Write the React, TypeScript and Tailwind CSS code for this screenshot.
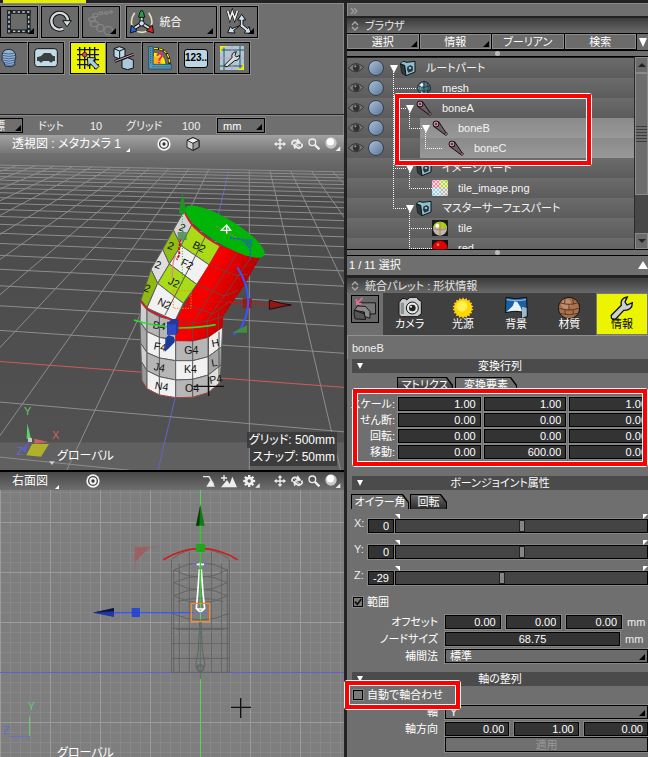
import React from "react";

const lines = (from: number, to: number) =>
  Array.from({ length: to - from + 1 }, (_, i) => i + from);

function Corner({ light = false }: { light?: boolean }) {
  return (
    <span
      className={
        "pointer-events-none absolute right-[3px] bottom-[3px] border-b-[6px] border-l-[6px] border-l-transparent " +
        (light ? "border-b-white" : "border-b-black")
      }
    />
  );
}

/* ---------- toolbar ---------- */

function ToolButton({
  label,
  width,
  corner,
  children,
}: {
  label: string;
  width: string;
  corner?: boolean;
  children: React.ReactNode;
}) {
  return (
    <button
      aria-label={label}
      className={
        "relative flex h-8 shrink-0 items-center justify-center gap-1 border border-black bg-[#6b6b6b] text-white shadow-[0_0_0_1px_#8a8a8a] " +
        width
      }
    >
      {children}
      {corner && <Corner />}
    </button>
  );
}

const MarqueeIcon = () => (
  <svg className="size-6" viewBox="0 0 72 72" fill="#a9c6d2" stroke="#111" strokeWidth="3">
    {[2, 16, 30, 44, 58].map((p) => (
      <g key={p}>
        <rect x={p} y="2" width="11" height="8" />
        <rect x={p} y="60" width="11" height="8" />
        <rect x="2" y={p} width="8" height="11" />
        <rect x="61" y={p} width="8" height="11" />
      </g>
    ))}
  </svg>
);

const RotateIcon = () => (
  <svg className="size-6" viewBox="0 0 72 72" fill="none">
    <path d="M46 56A25 25 0 1 1 60 34" stroke="#111" strokeWidth="13" />
    <path d="M46 56A25 25 0 1 1 60 34" stroke="#d5dde0" strokeWidth="7" />
    <path d="M44 32h26L57 50z" fill="#d5dde0" stroke="#111" strokeWidth="3" />
  </svg>
);

const ChainIcon = () => (
  <svg className="size-7" viewBox="0 0 84 84" fill="none" stroke="#858585" strokeWidth="4">
    <circle cx="64" cy="68" r="13" />
    <circle cx="40" cy="60" r="11" />
    <ellipse cx="22" cy="48" rx="12" ry="8" />
    <ellipse cx="15" cy="34" rx="10" ry="6" />
    <ellipse cx="25" cy="22" rx="8" ry="5" />
    <ellipse cx="42" cy="16" rx="6" ry="4" />
    <ellipse cx="58" cy="15" rx="5" ry="4" />
    <ellipse cx="72" cy="12" rx="4" ry="3" />
  </svg>
);

const GizmoIcon = () => (
  <svg className="size-6" viewBox="0 0 72 72">
    <path d="M14 8Q0 28 6 46M56 8q14 20 8 38M20 64q16 6 30 0" fill="none" stroke="#e5dfb4" strokeWidth="5" />
    <path d="M35 36v-16M35 40 14 54M35 40l22 14" stroke="#111" strokeWidth="12" />
    <path d="M35 36v-16M35 40 14 54M35 40l22 14" stroke="#cfe3e5" strokeWidth="6" />
    <path d="M26 22Q28 4 35 0q7 4 9 22z" fill="#25a044" stroke="#111" strokeWidth="3" />
    <path d="M1 69 4 46l18 16z" fill="#2467cc" stroke="#111" strokeWidth="3" />
    <path d="m71 69-4-23-18 16z" fill="#e2242b" stroke="#111" strokeWidth="3" />
    <circle cx="35" cy="40" r="8" fill="#cde" stroke="#111" strokeWidth="3" />
  </svg>
);

const WorldIcon = () => (
  <svg className="size-7" viewBox="0 0 84 84">
    <path d="m8 8 7 24 7-20 7 20 8-24" fill="none" stroke="#111" strokeWidth="9" />
    <path d="m8 8 7 24 7-20 7 20 8-24" fill="none" stroke="#eee" strokeWidth="5" />
    <g stroke="#111" strokeWidth="3" fill="#cfe0ee">
      <path d="M46 52V36h-8l12-17 12 17h-8v14l14 12 4-6 6 20-20-1 4-7-18-14-18 13 4 8-22-1 8-19 5 7z" />
    </g>
  </svg>
);

const HeadIcon = () => (
  <svg className="size-6" viewBox="0 0 72 72">
    <path d="M8 26Q10 3 34 3q26 2 26 30l-4 12v18l-14 6-22-2-4-12-8-10z" fill="#8fb6d4" stroke="#111" strokeWidth="3" />
    <path d="M11 17q22 8 45 0M9 26q24 8 50 0M9 35q24 8 50 0M11 44q22 8 45 0M17 53q18 7 38 0M20 61q16 6 35 0" stroke="#3a4b88" strokeWidth="3" fill="none" />
  </svg>
);

const CarIcon = () => (
  <svg className="size-6" viewBox="0 0 72 72">
    <rect x="2" y="8" width="68" height="54" rx="9" fill="#c2dbe6" stroke="#111" strokeWidth="3" />
    <path d="M9 45V34l12-4 9-9h19l8 9h6v15h-6q-6 9-12 0H27q-6 9-12 0z" fill="#3a3f42" />
  </svg>
);

const SnapGridIcon = () => (
  <svg className="size-6" viewBox="0 0 72 72">
    <path d="M3 11h66M3 26h66M3 41h66M3 56h66M11 3v66M26 3v66M41 3v66M56 3v66" stroke="#111" strokeWidth="4" />
    <path d="m34 34 25 2-7 8 17 17-9 9-17-17-7 8z" fill="#a9cce0" stroke="#111" strokeWidth="3" />
    <circle cx="26" cy="26" r="7" fill="#d33a8b" stroke="#111" strokeWidth="2" />
  </svg>
);

const MirrorIcon = () => (
  <svg className="size-6" viewBox="0 0 72 72" stroke="#111" strokeWidth="3">
    <path d="m6 8 16-6 17 6v24l-16 7-17-7z" fill="#bcd9e8" />
    <path d="m6 8 17 7 16-7M23 15v23" fill="none" />
    <path d="m30 42 17-7 17 7v24l-17 5-17-5z" fill="#a9cadb" />
    <path d="m8 46 56-21" strokeWidth="9" />
    <path d="m8 46 56-21" stroke="#e0a0b8" strokeWidth="3" />
  </svg>
);

const ProtractorIcon = () => (
  <svg className="size-6" viewBox="0 0 72 72">
    <path d="M18 7q46 0 47 48" fill="none" stroke="#111" strokeWidth="7" />
    <path d="M18 7q46 0 47 48" fill="none" stroke="#ffe800" strokeWidth="4" strokeDasharray="11 4" />
    <path d="M16 18q36 2 38 38H16z" fill="#f4f000" stroke="#333" strokeWidth="2" />
    <path d="M16 30q24 2 26 26H16z" fill="#ffb01c" />
    <path d="M28 30q2-9 10-7 9 4 0 12l-4 6v3m-1 4v4" fill="none" stroke="#e8237c" strokeWidth="6" />
    <path d="M2 2h13v53h55v14H2z" fill="#4d9dc4" stroke="#16394d" strokeWidth="2" />
    <path d="M8 6v48M14 62h54" stroke="#1a4a66" strokeWidth="4" strokeDasharray="2 4" />
  </svg>
);

const WrenchGridIcon = () => (
  <svg className="size-6" viewBox="0 0 72 72">
    <path d="M0 0h72v72H0z" fill="#a9cbd8" />
    <path d="M12 0v72M60 0v72M0 12h72M0 60h72" stroke="#3b4d55" strokeWidth="3" />
    <path d="M36 0v72M0 36h72" stroke="#e48db4" strokeWidth="3" />
    <path d="M2 18V2h16M54 70h16V54" fill="none" stroke="#f7ee00" strokeWidth="5" />
    <path d="m14 57 22-22q-3-15 13-18l-4 11 4 5 10-5q1 15-15 16L22 62q-9 2-8-5z" fill="#d8dcdc" stroke="#111" strokeWidth="3" />
  </svg>
);

/* ---------- viewport headers ---------- */

const TargetIcon = () => (
  <svg className="size-3.5" viewBox="0 0 42 42">
    <circle cx="21" cy="21" r="20" fill="#f4f4f4" />
    <circle cx="21" cy="21" r="13" fill="none" stroke="#444" strokeWidth="4" />
    <circle cx="21" cy="21" r="5" fill="#333" />
  </svg>
);

const CubeIcon = () => (
  <svg className="size-3.5" viewBox="0 0 42 42" stroke="#111" strokeWidth="2.5">
    <path d="M21 2 39 10v21L21 40 3 31V10z" fill="#cfcfcf" />
    <path d="M21 2 39 10 21 19 3 10z" fill="#f2f2f2" />
    <path d="M21 19 39 10v21L21 40z" fill="#999" />
  </svg>
);

const MoveIcon = () => (
  <svg className="size-3" viewBox="0 0 36 36">
    <path d="m18 0 7 8h-5v8h8v-5l8 7-8 7v-5h-8v8h5l-7 8-7-8h5v-8H8v5l-8-7 8-7v5h8V8h-5z" fill="#eee" />
  </svg>
);

const OrbitIcon = () => (
  <svg className="size-3" viewBox="0 0 36 36" fill="none" stroke="#eee">
    <path d="M4 20Q0 7 14 7l10 6M32 17q5 11-9 14L11 24" strokeWidth="5" />
    <path d="m20 2 10 14-14 2zM16 20l-9-1 4 14zM10 13q9 11 18 14" fill="#eee" strokeWidth="2" />
  </svg>
);

const ZoomIcon = () => (
  <svg className="size-3" viewBox="0 0 36 36" fill="none" stroke="#eee">
    <circle cx="13" cy="13" r="10" strokeWidth="4" />
    <path d="m21 21 13 13" strokeWidth="7" />
  </svg>
);

const BallIcon = () => (
  <svg className="h-3.5 w-4" viewBox="0 0 48 42">
    <circle cx="18" cy="18" r="17" fill="#c8c8c8" />
    <circle cx="16" cy="14" r="11" fill="#fff" />
    <path d="M46 28v14H32z" fill="#eee" />
  </svg>
);

const ViewNav = () => (
  <div className="flex items-center gap-[5px] pr-[3px]">
    <button aria-label="移動"><MoveIcon /></button>
    <button aria-label="回転"><OrbitIcon /></button>
    <button aria-label="ズーム"><ZoomIcon /></button>
    <button aria-label="表示"><BallIcon /></button>
  </div>
);

/* ---------- perspective scene ---------- */

const G = "#8d8d8d";

const gridTop = (x: number) => 45 + x * 0.02;

function PerspectiveGrid() {
  return (
    <g strokeWidth="3">
      {lines(-12, 6).map((k) => {
        const slope = 0.236 * k;
        const x1 = 748 + slope * 250;
        const y1 = gridTop(x1);
        return (
          <line
            key={k}
            x1={748 + slope * (y1 + 200)}
            y1={y1}
            x2={748 + slope * 1200}
            y2={1000}
            stroke={k === -1 ? "#6464c8" : G}
          />
        );
      })}
      {lines(-2, 21).map((k) => {
        const y = 3 / (0.003738 + 0.000492 * k) - 168;
        return (
          <line
            key={k}
            x1={0}
            y1={y}
            x2={1035}
            y2={y + (1035 * (y + 168)) / 10680}
            stroke={k === 0 ? "#d05a5a" : G}
          />
        );
      })}
    </g>
  );
}

const WHITE = "#f1f1f1";
const LIME = "#aadb18";
const GREY = "#b6b6b6";

const tiles: [string, string][] = [
  ["553,182 575,225 543,287 520,240", "#d4d4d4"],
  ["575,225 612,258 660,288 628,345 543,287", LIME],
  ["520,240 543,287 508,342 488,298", "#93bd14"],
  ["543,287 628,345 590,403 508,342", WHITE],
  ["488,298 508,342 473,400 453,358", "#dedede"],
  ["508,342 590,403 550,460 473,400", LIME],
  ["453,358 473,400 441,472 423,450", "#8fb912"],
  ["473,400 550,460 525,512 441,474", WHITE],
  ["422,455 441,480 441,545 420,515", "#cfcfcf"],
  ["441,480 478,500 527,513 527,570 478,562 441,545", GREY],
  ["420,515 441,545 441,608 422,580", "#a8a8a8"],
  ["441,545 478,562 527,572 527,632 478,624 441,608", WHITE],
  ["527,572 578,573 625,562 625,620 578,632 527,632", GREY],
  ["625,562 668,530 665,590 625,620", "#ededed"],
  ["422,580 441,608 441,662 424,635", "#cfcfcf"],
  ["441,608 478,624 527,632 527,690 478,680 441,662", GREY],
  ["527,632 578,632 625,620 625,675 578,688 527,690", WHITE],
  ["625,620 665,590 663,645 625,675", "#a5a5a5"],
  ["424,635 441,662 441,716 426,692", "#999"],
  ["441,662 478,680 527,690 527,743 478,735 441,716", WHITE],
  ["527,690 578,688 625,675 625,728 578,742 527,743", GREY],
  ["625,675 663,645 660,698 625,728", "#e0e0e0"],
];

const marks: [string, number, number, number][] = [
  ["2", 535, 240, 20],
  ["B2", 575, 292, 26],
  ["2", 500, 295, 20],
  ["F2", 540, 344, 26],
  ["2", 462, 352, 20],
  ["J2", 502, 400, 26],
  ["2", 430, 422, 20],
  ["N2", 470, 462, 26],
  ["B4", 457, 534, 10],
  ["F4", 460, 598, 10],
  ["G4", 553, 613, 0],
  ["H", 637, 592, -10],
  ["J4", 460, 660, 10],
  ["K4", 552, 668, 0],
  ["L", 636, 650, -10],
  ["N4", 463, 716, 10],
  ["O4", 555, 726, 0],
  ["P4", 630, 702, -10],
];

function PerspectiveScene() {
  return (
    <svg
      className="absolute inset-0 size-full [font-family:'Liberation_Sans','Noto_Sans_CJK_JP',sans-serif]"
      viewBox="0 9 1032 975"
      preserveAspectRatio="xMinYMin slice"
    >
      <defs>
        <linearGradient id="sky" x1="0" y1="0" x2="0" y2="1">
          <stop offset="0" stopColor="#707070" />
          <stop offset="0.14" stopColor="#4b4b4b" />
          <stop offset="1" stopColor="#525252" />
        </linearGradient>
        <linearGradient id="redBody" x1="0" y1="0" x2="1" y2="0.5">
          <stop offset="0.5" stopColor="#f60000" />
          <stop offset="0.85" stopColor="#b80000" />
        </linearGradient>
      </defs>
      <rect y="9" width="1040" height="980" fill="url(#sky)" />
      <rect y="877" width="1040" height="110" fill="#606060" />
      <PerspectiveGrid />

      <g stroke="#5f5f5f" strokeWidth="3" strokeLinejoin="round">
        {tiles.map(([points, fill]) => (
          <polygon key={points} points={points} fill={fill} />
        ))}
      </g>
      <path d="M578 573V742M478 500v235M617 258 495 495M625 562v166M657 545v160" stroke="#555" strokeWidth="3" fill="none" />
      <path d="M660 288 780 322 730 410 670 497 668 533 625 562 578 573 527 572 525 513z" fill="url(#redBody)" />
      <path
        d="M712 308 578 520v50M755 320 622 510v52M630 345l80 32 34-4M590 403l82 35 42-16M550 460l90 32 50-40M527 513l51 7 50-8 40-12M655 490v50"
        fill="none"
        stroke="#77403c"
        strokeWidth="3"
      />
      <ellipse cx="674" cy="245" rx="138" ry="38" transform="rotate(31 674 245)" fill="#00b507" />
      <path d="M553 184q10 26 30 48 38 36 80 56M424 455q14 24 45 38l58 20" fill="none" stroke="#dc1a24" strokeWidth="5" />
      <path d="M426 694 441 716 478 735 527 743 578 742 625 728 660 698" fill="none" stroke="#c33" strokeWidth="3" strokeDasharray="6 4" />
      <g fontSize="32" fill="#111">
        {marks.map(([t, x, y, r]) => (
          <text key={t + x + y} x={x} y={y} transform={`rotate(${r} ${x} ${y})`}>
            {t}
          </text>
        ))}
      </g>

      <path d="M547 190V400" stroke="#12c012" strokeWidth="3" strokeDasharray="3 5" />
      <path d="m547 128 12 58-8 7h-9l-5-6z" fill="#199a1c" />
      <rect x="533" y="246" width="27" height="24" fill="#3f8a50" opacity="0.8" />
      <path d="m542 268-5 30 1 16-8 15" fill="none" stroke="#d01818" strokeWidth="6" strokeDasharray="9 3" />
      <path d="M517 390q-1-60 10-72" fill="none" stroke="#d88a80" strokeWidth="4" />
      <rect x="520" y="422" width="53" height="53" fill="none" stroke="#ff8b1a" strokeWidth="3" strokeDasharray="4 4" />
      <path d="m578 453 110 4" stroke="#c02020" strokeWidth="3" strokeDasharray="4 5" />
      <path d="m685 457 125 6" stroke="#c81818" strokeWidth="4" />
      <path d="M808 450v28l42-9 24-4-30-5z" fill="#8e1a18" stroke="#2b0706" strokeWidth="3" />
      <rect x="728" y="445" width="27" height="30" fill="#941c1c" />
      <path d="M712 352q60 94 10 184l-22 19" fill="none" stroke="#3557ff" strokeWidth="6" />
      <path d="m690 264 38 4 23 28v36" fill="none" stroke="#3046ff" strokeWidth="4" strokeDasharray="7 4" />
      <path d="M718 268h38v24z" fill="#14807a" />
      <path d="M741 526v22h-45z" fill="#3f8f3c" />
      <path d="m648 228 60 34" stroke="#d46a50" strokeWidth="3" strokeDasharray="6 3" />
      <path d="m680 225-16 16h28zM680 225v26" fill="none" stroke="#fff" strokeWidth="4" />
      <path d="M402 510q55 18 135 24 70-1 110-10" fill="none" stroke="#26e02a" strokeWidth="5" />
      <path d="m507 515 8-8h20v39l-8 8h-26v-39z" fill="#25389c" />
      <rect x="502" y="523" width="26" height="30" fill="#2f49c6" />
      <path d="m496 565 10-10 16 6 2 16-16 16-13 12z" fill="#1b3a9c" />
      <path d="M580 709h92M626 680v58" stroke="#111" strokeWidth="4" />

      <path d="m82 820 11 46H80z" fill="#5fd06a" />
      <path d="m102 866 44 10-42 5z" fill="#d0625e" />
      <path d="m88 876-12 32-12-8z" fill="#5a5ec8" />
      <path d="M96 882h51l-24 38-44-4z" fill="#b0b02c" />
      <rect x="84" y="864" width="12" height="12" fill="#c8c8c8" />
      <path d="M147 934h17l-8 11z" fill="#ccc" />
      <g fontSize="33">
        <text x="72" y="796" fill="#62c86a">Y</text>
        <text x="156" y="868" fill="#cf6460">X</text>
        <text x="50" y="914" fill="#6468d0">Z</text>
      </g>
    </svg>
  );
}

/* ---------- orthographic scene ---------- */

function SideScene() {
  return (
    <svg
      className="absolute inset-0 size-full [font-family:'Liberation_Sans','Noto_Sans_CJK_JP',sans-serif]"
      viewBox="0 60 1032 830"
      preserveAspectRatio="xMinYMin slice"
    >
      <rect y="60" width="1040" height="900" fill="#7e7e7e" />
      <g shapeRendering="crispEdges" strokeWidth="3">
        {lines(0, 34).map((k) => (
          <line key={"v" + k} x1={k * 30 + 1.5} y1={60} x2={k * 30 + 1.5} y2={960} stroke="#888" />
        ))}
        {lines(0, 28).map((k) => (
          <line key={"h" + k} x1={0} y1={k * 30 + 67.5} x2={1040} y2={k * 30 + 67.5} stroke="#888" />
        ))}
        {lines(0, 6).map((k) => (
          <line key={"V" + k} x1={k * 150 + 1.5} y1={60} x2={k * 150 + 1.5} y2={960} stroke="#9b9b9b" />
        ))}
        {lines(0, 5).map((k) => (
          <line key={"H" + k} x1={0} y1={k * 150 + 157.5} x2={1040} y2={k * 150 + 157.5} stroke="#9b9b9b" />
        ))}
        <line x1={0} y1={607.5} x2={1040} y2={607.5} stroke="#5f5fd6" />
        <line x1={601.5} y1={60} x2={601.5} y2={960} stroke="#4cdc4c" />
      </g>

      <g fill="none" stroke="#636363" strokeWidth="3">
        <path d="M514 268V607M521 300V607M538 280V607M568 245V607M634 245V607M664 280V607M682 300V607M688 268V607" />
        <path d="M514 475h174M530 478h144M514 520h174M514 565h174M514 607h174" />
        <path d="M517 266q84-60 169 0M522 300q80-44 160 0q-80 44-160 0M522 338q80-40 160 0q-80 44-160 0M522 377q80-40 160 0q-80 44-160 0M516 430q86 40 172 0M532 395q68-20 138 0" />
        <path d="m599 455-4 85-8 45 14 22 14-22-8-45-4-85zM587 590h28M601 455v172" />
        <circle cx="601" cy="594" r="11" />
      </g>
      <path d="M490 269q112-68 223 0" fill="none" stroke="#cc1f1f" strokeWidth="5" />
      <path d="M405 232h44l-44 44z" fill="#9c6060" />
      <path d="M405 300v-68h66" fill="none" stroke="#9c6060" strokeWidth="2" />
      <rect x="588" y="222" width="27" height="24" fill="#1fa61f" />
      <path d="m601 104 13 63h-26z" fill="#127a14" />
      <path d="m601 104-13 63h10z" fill="#063c08" />
      <path d="m598 300-5 70-4 45 12 12 13-12-5-45-5-70z" fill="none" stroke="#fff" strokeWidth="5" />
      <path d="M578 283h46" stroke="#7070e0" strokeWidth="4" />
      <path d="M590 283h22M601 276v16M590 417h22" stroke="#fff" strokeWidth="5" />
      <path d="M601 167V222M601 246V400" stroke="#1fd81f" strokeWidth="4" />
      <path d="M340 428h240" stroke="#3358ff" strokeWidth="4" />
      <path d="M580 428h42" stroke="#7070d0" strokeWidth="3" />
      <path d="m278 428 64-14v27z" fill="#2336a0" />
      <path d="m278 428 64-14v10z" fill="#0c1440" />
      <rect x="395" y="414" width="25" height="27" fill="#2a47cf" />
      <rect x="574" y="400" width="55" height="55" rx="3" fill="none" stroke="#f48a30" strokeWidth="4" />
      <path d="M693 712h60M722 684v60" stroke="#111" strokeWidth="4" />
      <path d="M89 740v60" stroke="#6fd070" strokeWidth="3" />
      <path d="M30 800h60" stroke="#6a6cd0" strokeWidth="3" />
      <g fontSize="33">
        <text x="83" y="721" fill="#62c86a">Y</text>
        <text x="9" y="792" fill="#6468d0">Z</text>
      </g>
    </svg>
  );
}

/* ---------- browser tree ---------- */

const FolderIcon = () => (
  <svg className="size-4" viewBox="0 0 48 48">
    <path d="m1 12 13 4 4 31-13-8z" fill="#2a3a42" stroke="#111" strokeWidth="2" />
    <path d="m1 12 8-8 12 3 24-3v32l-27 11-4-31z" fill="#8fc0d2" stroke="#111" strokeWidth="3" />
    <path d="m22 20 9-5 8 5-1 13-13 5-4-9z" fill="#26353c" />
    <circle cx="30" cy="24" r="4" fill="#8fc0d2" />
  </svg>
);

const MeshIcon = () => (
  <svg className="size-4" viewBox="0 0 48 48">
    <circle cx="24" cy="24" r="19" fill="#86bcd0" stroke="#111" strokeWidth="3" />
    <path d="M24 6Q4 24 24 42L40 36Q50 10 24 6" fill="#2c4a58" opacity=".6" />
    <path d="M6 18q18 8 36 0M6 30q18 8 36 0M24 5v38M14 8q-6 16 0 32M34 8q6 16 0 32" fill="none" stroke="#17262d" strokeWidth="2" />
    <circle cx="17" cy="15" r="5" fill="#e3f4fa" />
  </svg>
);

const BoneIcon = () => (
  <svg className="size-4" viewBox="0 0 48 48">
    <path d="m5 19 35 26 4-4L20 5z" fill="#6e5d62" stroke="#111" strokeWidth="3" />
    <circle cx="12" cy="12" r="9" fill="#c987a4" stroke="#111" strokeWidth="3" />
    <circle cx="12" cy="12" r="3" fill="#3d1f2c" />
    <circle cx="42" cy="42" r="4" fill="#c987a4" stroke="#111" strokeWidth="2" />
  </svg>
);

const TileImageIcon = () => (
  <svg className="size-4" viewBox="0 0 48 48">
    <path d="M0 0h24v24H0z" fill="#ef8fa4" />
    <path d="M24 0h24v24H24z" fill="#b6d83e" />
    <path d="M0 24h24v24H0z" fill="#9cd3e4" />
    <path d="M24 24h24v24H24z" fill="#bdb6b6" />
    <path d="m0 6 42 42M0 18l30 30M0 30l18 18M6 0l42 42M18 0l30 30M30 0l18 18M42 0 0 42M30 0 0 30M18 0 0 18M48 6 6 48M48 18 18 48M48 30 30 48" stroke="#fff" strokeWidth="3" opacity=".7" />
  </svg>
);

const TileBallIcon = () => (
  <svg className="size-4" viewBox="0 0 48 48">
    <path d="M0 0h48v48H0z" fill="#1c1c1c" />
    <circle cx="24" cy="26" r="21" fill="#bcbab0" />
    <path d="M4 20Q8 5 26 5q18 2 19 18l-22 4z" fill="#a6cf22" />
    <path d="M4 26q20 8 41 0M24 5v40" stroke="#c05a50" strokeWidth="2" fill="none" />
    <circle cx="16" cy="17" r="6" fill="#fff" />
  </svg>
);

const RedBallIcon = () => (
  <svg className="size-4" viewBox="0 0 48 48">
    <path d="M0 0h48v48H0z" fill="#141414" />
    <circle cx="24" cy="25" r="23" fill="#e60000" />
    <circle cx="18" cy="14" r="4" fill="#ff7a6a" />
  </svg>
);

const EyeIcon = () => (
  <svg className="h-3 w-4" viewBox="0 0 48 36">
    <path d="M1 18Q22-8 47 16 24 42 1 18z" fill="#777" stroke="#353535" strokeWidth="3" />
    <circle cx="25" cy="17" r="10" fill="#303030" />
    <circle cx="22" cy="13" r="3" fill="#999" />
  </svg>
);

type Node = {
  name: string;
  icon: React.ReactNode;
  indent: string;
  open?: boolean;
  eye?: boolean;
  selected?: boolean;
};

const nodes: Node[] = [
  { name: "ルートパート", icon: <FolderIcon />, indent: "pl-[2px]", open: true, eye: true },
  { name: "mesh", icon: <MeshIcon />, indent: "pl-[18px]", eye: true },
  { name: "boneA", icon: <BoneIcon />, indent: "pl-[18px]", open: true, eye: true },
  { name: "boneB", icon: <BoneIcon />, indent: "pl-0", open: true, eye: true, selected: true },
  { name: "boneC", icon: <BoneIcon />, indent: "pl-[16px]", eye: true, selected: true },
  { name: "イメージパート", icon: <FolderIcon />, indent: "pl-[18px]", open: true },
  { name: "tile_image.png", icon: <TileImageIcon />, indent: "pl-[34px]" },
  { name: "マスターサーフェスパート", icon: <FolderIcon />, indent: "pl-[18px]", open: true },
  { name: "tile", icon: <TileBallIcon />, indent: "pl-[34px]" },
  { name: "red", icon: <RedBallIcon />, indent: "pl-[34px]" },
];

function TreeRow({ node }: { node: Node }) {
  return (
    <li className="flex h-5 bg-linear-to-b from-[#6b6b6b] to-[#5c5c5c]">
      <div className="flex w-[39px] shrink-0 items-center gap-1 pl-px">
        {node.eye && (
          <>
            <EyeIcon />
            <span className="size-4 rounded-full border border-[#35404c] bg-linear-to-br from-[#a9bfd8] to-[#5c7898]" />
          </>
        )}
      </div>
      {node.selected && <span className="w-[34px] shrink-0" />}
      <div className={"relative flex min-w-0 flex-1 items-center " + node.indent + (node.selected ? " bg-linear-to-b from-[#8a8a8a] to-[#989898]" : "")}>
        <span className="z-10 w-3 shrink-0 text-center text-[11px] text-white">
          {node.open && (
            <span className="inline-block border-x-[4px] border-t-[8px] border-x-transparent border-t-white align-middle" />
          )}
        </span>
        <span className="z-10 mr-2.5 shrink-0">{node.icon}</span>
        <span className="whitespace-nowrap text-[#f4f4f4]">{node.name}</span>
      </div>
    </li>
  );
}

function Browser() {
  return (
    <section className="relative">
      <PanelTitle>ブラウザ</PanelTitle>
      <div className="flex h-[17px] bg-black pt-px">
        {["選択", "情報", "ブーリアン", "検索"].map((t, i) => (
          <button
            key={t}
            className="relative mr-px flex h-[15px] flex-1 items-center justify-center border border-[#8c8c8c] bg-[#6b6b6b] text-white"
          >
            {t}
            {i < 2 && <span className="absolute right-px bottom-px border-b-[6px] border-l-[6px] border-b-black border-l-transparent" />}
          </button>
        ))}
        <button aria-label="メニュー" className="flex w-[11px] items-center justify-center bg-[#6b6b6b]">
          <span className="border-x-[4px] border-t-[9px] border-x-transparent border-t-white" />
        </button>
      </div>
      <Splitter />
      <div className="flex h-[192px] overflow-hidden">
        <div className="relative min-w-0 flex-1 pt-px">
          <ul>
            {nodes.map((n) => (
              <TreeRow key={n.name} node={n} />
            ))}
          </ul>
          <svg className="pointer-events-none absolute top-px left-0 h-[192px] w-24" viewBox="0 0 96 192" fill="none" stroke="#fff" strokeDasharray="1 1">
            <path d="M46.5 14V150.5H60M46 30.500h25M46 50.500h14M62.500 54v16.500H76M78.500 74v16.500H102M46 110.500h14M62.500 114v16.500H88M62.500 154v36.500H88M62 170.500h26" />
          </svg>
        </div>
        <div className="flex w-[14px] shrink-0 flex-col border-l border-[#2a2a2a] bg-[#474747]">
          <button aria-label="上へ" className="flex h-4 items-center justify-center border border-[#8a8a8a] bg-[#6b6b6b]">
            <span className="border-x-[4px] border-b-[4px] border-x-transparent border-b-[#222]" />
          </button>
          <div className="flex h-[122px] flex-col items-center justify-center gap-[2px] border border-[#8a8a8a] bg-[#6d6d6d]">
            {lines(0, 5).map((i) => (
              <span key={i} className="h-px w-full bg-[#3c3c3c]" />
            ))}
          </div>
          <button aria-label="下へ" className="mt-auto flex h-4 items-center justify-center border border-[#8a8a8a] bg-[#6b6b6b]">
            <span className="border-x-[4px] border-t-[4px] border-x-transparent border-t-[#222]" />
          </button>
        </div>
      </div>
      <Splitter />
      <div className="flex h-[17px] items-center justify-between bg-[#6f6f6f] pl-0.5 text-white">
        <span>1 / 11 選択</span>
        <span className="border-x-[5px] border-b-[8px] border-x-transparent border-b-white" />
      </div>
      <Highlight className="top-[75px] right-[56px] left-[47px] h-[73px]" />
    </section>
  );
}

/* ---------- shared panel parts ---------- */

function Highlight({ className }: { className: string }) {
  return (
    <span className={"pointer-events-none absolute z-20 rounded-[3px] border border-white " + className}>
      <span className="block size-full border-4 border-[#ff0000]">
        <span className="block size-full border border-white" />
      </span>
    </span>
  );
}

function Splitter() {
  return (
    <div className="flex h-[7px] justify-center border-y border-black bg-[#6f6f6f]">
      <span className="size-[5px] rounded-full bg-[#bbb]" />
    </div>
  );
}

function PanelTitle({ children }: { children: React.ReactNode }) {
  return (
    <h2 className="flex h-[15px] items-center gap-1.5 bg-linear-to-b from-[#3c3c3c] to-[#6a6a6a] pl-1 text-[#e4e4e4]">
      <svg className="h-2.5 w-2" viewBox="0 0 24 30" fill="none" stroke="#aaa" strokeWidth="4">
        <path d="M3 12 12 3l9 9M3 18l9 9 9-9" />
      </svg>
      {children}
    </h2>
  );
}

function SectionHeader({ children }: { children: React.ReactNode }) {
  return (
    <h3 className="relative ml-[5px] flex h-[14px] items-center justify-center bg-[#4b4b4b] text-white">
      <span className="absolute left-[5px] border-x-[3px] border-t-[6px] border-x-transparent border-t-white" />
      {children}
    </h3>
  );
}

function Tab({ active, width, children }: { active?: boolean; width: string; children: React.ReactNode }) {
  return (
    <button className={"h-[15px] bg-black p-px pb-0 [clip-path:polygon(0_0,calc(100%-6px)_0,100%_8px,100%_100%,0_100%)] " + width}>
      <span
        className={
          "flex h-full items-center justify-center text-white [clip-path:polygon(0_0,calc(100%-6px)_0,100%_8px,100%_100%,0_100%)] " +
          (active ? "bg-[#6f6f6f]" : "bg-linear-to-b from-[#6a6a6a] to-[#2b2b2b]")
        }
      >
        {children}
      </span>
    </button>
  );
}

const field =
  "h-[14px] min-w-0 border border-black bg-[#333] px-1 text-right text-[11px] leading-3 text-white shadow-[0_0_0_1px_#868686] outline-none";

function Matrix() {
  const rows: [string, string[]][] = [
    ["スケール:", ["1.00", "1.00", "1.00"]],
    ["せん断:", ["0.00", "0.00", "0.00"]],
    ["回転:", ["0.00", "0.00", "0.00"]],
    ["移動:", ["0.00", "600.00", "0.00"]],
  ];
  return (
    <div className="relative">
      <div className="-mr-1 flex flex-col gap-[2px] pt-[5px]">
        {rows.map(([name, values]) => (
          <div key={name} role="group" aria-label={name} className="flex h-[14px] items-center gap-[3px]">
            <span className="w-12 shrink-0 text-right whitespace-nowrap text-white">{name}</span>
            {values.map((v, i) => (
              <input key={i} aria-label={`${name} ${"XYZ"[i]}`} defaultValue={v} className={field + " w-0 flex-1"} />
            ))}
          </div>
        ))}
      </div>
      <Highlight className="-top-[4px] right-0 left-[5px] h-[79px]" />
    </div>
  );
}

function AngleRow({ axis, value }: { axis: string; value: number }) {
  return (
    <div className="flex h-[26px] items-end pb-[5px] pl-[7px]">
      <label htmlFor={`angle-${axis}`} className="w-[14px] self-center text-[#eee]">
        {axis}:
      </label>
      <input id={`angle-${axis}`} defaultValue={value} className={field + " w-[26px]"} />
      <div className="ml-px min-w-0 flex-1">
        <div className="flex justify-between">
          <span className="border-t-[5px] border-l-[5px] border-t-white border-l-transparent" />
          <span className="border-t-[5px] border-r-[5px] border-t-white border-r-transparent" />
        </div>
        <input
          type="range"
          aria-label={`${axis} 角度`}
          min={-180}
          max={180}
          defaultValue={value}
          className="block h-[14px] w-full appearance-none border border-black bg-[#444] shadow-[0_0_0_1px_#868686] [&::-webkit-slider-thumb]:h-3 [&::-webkit-slider-thumb]:w-[6px] [&::-webkit-slider-thumb]:appearance-none [&::-webkit-slider-thumb]:border [&::-webkit-slider-thumb]:border-[#222] [&::-webkit-slider-thumb]:bg-[#858585]"
        />
      </div>
    </div>
  );
}

function Check({ label, checked }: { label: string; checked?: boolean }) {
  return (
    <label className="flex h-4 items-center gap-1 pl-[6px] text-white">
      <input
        type="checkbox"
        defaultChecked={checked}
        className="peer size-[10px] appearance-none border border-black bg-[#7a7a7a] shadow-[0_0_0_1px_#868686]"
      />
      <svg className="pointer-events-none absolute hidden size-[10px] peer-checked:block" viewBox="0 0 30 30" fill="none" stroke="#111" strokeWidth="5">
        <path d="m6 14 7 8L25 6" />
      </svg>
      {label}
    </label>
  );
}

function FormRow({ label, id, children }: { label: string; id: string; children: React.ReactNode }) {
  return (
    <div className="flex h-[17px] items-center gap-[7px]">
      <label htmlFor={id} className="w-[91px] shrink-0 text-right text-white">
        {label}
      </label>
      <div className="flex min-w-0 flex-1 items-center gap-[5px]">{children}</div>
    </div>
  );
}

function Drop({ id, value }: { id: string; value: string }) {
  return (
    <div className="relative min-w-0 flex-1">
      <select
        id={id}
        className="block h-[14px] w-full appearance-none border border-black bg-[#6b6b6b] px-1 text-[11px] leading-3 text-white shadow-[0_0_0_1px_#868686]"
      >
        <option>{value}</option>
      </select>
      <Corner />
    </div>
  );
}

/* ---------- info palette ---------- */

const paletteTabs: { label: string; icon: React.ReactNode }[] = [
  {
    label: "カメラ",
    icon: (
      <svg className="size-6" viewBox="0 0 72 72">
        <path d="M3 20 12 8h10l4 4 10-8h20l6 8 8 4v38L58 62H10L3 56z" fill="#c9cdce" stroke="#111" strokeWidth="3" />
        <path d="M8 20v34h10V20z" fill="#8d9294" />
        <circle cx="43" cy="36" r="18" fill="#e6e8e8" stroke="#111" strokeWidth="3" />
        <circle cx="43" cy="36" r="10" fill="#222" />
        <circle cx="39" cy="32" r="3" fill="#fff" />
      </svg>
    ),
  },
  {
    label: "光源",
    icon: (
      <svg className="size-6" viewBox="0 0 72 72">
        {lines(0, 17).map((i) => (
          <path key={i} d="m31 12 5-8 5 8z" fill="#ffcf1c" transform={`rotate(${i * 20} 36 36)`} />
        ))}
        <circle cx="36" cy="36" r="26" fill="#ffd600" />
        <circle cx="33" cy="31" r="16" fill="#fff14f" />
      </svg>
    ),
  },
  {
    label: "背景",
    icon: (
      <svg className="size-6" viewBox="0 0 72 72">
        <path d="M6 4q30 8 62 0l2 58-16 4V48Q30 42 4 50z" fill="#1d5fa3" stroke="#111" strokeWidth="3" />
        <path d="M7 48Q30 42 54 46l-4-12L40 18l-8-2-6 14z" fill="#e7f1f8" />
        <path d="M54 48V32l14 4v24l-14 6z" fill="#9fb7c8" />
        <path d="M8 8q28 7 58 0v5q-30 6-58 0z" fill="#79b4e4" />
      </svg>
    ),
  },
  {
    label: "材質",
    icon: (
      <svg className="size-6" viewBox="0 0 72 72">
        <circle cx="36" cy="36" r="32" fill="#a9724e" stroke="#111" strokeWidth="3" />
        <circle cx="28" cy="24" r="15" fill="#c99a78" opacity=".7" />
        <path d="M8 20q28 10 56 0M4 36q32 12 64 0M9 52q27 9 54 0M26 5q-4 9-3 19M46 6q4 9 3 19M36 26v15M24 42q-1 8 2 14M48 42q2 8-1 14" fill="none" stroke="#5f3824" strokeWidth="3" />
      </svg>
    ),
  },
];

function InfoPalette() {
  return (
    <section className="flex flex-1 flex-col bg-[#6f6f6f]">
      <PanelTitle>統合パレット : 形状情報</PanelTitle>
      <nav className="flex h-[42px] bg-[#404040]">
        <button aria-label="表示切替" className="flex w-9 items-start justify-center bg-[#6f6f6f] pt-0.5">
          <svg className="size-7 border border-black bg-[#666]" viewBox="0 0 84 84">
            <path d="M14 22h62v36H40z" fill="#777" stroke="#111" strokeWidth="3" />
            <path d="m8 46 10-14 26 2 14 16v22l-18-6V52z" fill="#8a8a8a" stroke="#111" strokeWidth="3" />
            <path d="M8 46q-4 10 2 28l34 2-4-18z" fill="#555" stroke="#111" strokeWidth="3" />
            <path d="M34 6 18 22M14 10l2 16 15-1" fill="none" stroke="#d9719a" strokeWidth="6" />
          </svg>
        </button>
        {paletteTabs.map((t) => (
          <button key={t.label} className="flex flex-1 flex-col items-center pt-[3px] text-white">
            {t.icon}
            <span className="-mt-0.5 leading-3">{t.label}</span>
          </button>
        ))}
        <button className="relative flex w-[52px] flex-col items-center border border-[#777] bg-[#ecf400] pt-0.5 text-black">
          <svg className="size-6" viewBox="0 0 72 72">
            <path d="m4 58 30-30Q30 6 52 3l-7 15 6 9 16-7q0 24-26 23L18 68Q2 74 4 58z" fill="#c9d0d2" stroke="#111" strokeWidth="4" />
          </svg>
          <span className="-mt-0.5 leading-3">情報</span>
        </button>
      </nav>
      <p className="flex h-6 items-center border-t border-l border-[#909090] pl-1 text-[#f0f0f0]">boneB</p>

      <SectionHeader>変換行列</SectionHeader>
      <div className="mt-[4px] flex gap-[2px] pl-[50px]">
        <Tab width="w-[56px]">マトリクス</Tab>
        <Tab width="w-[62px]" active>変換要素</Tab>
      </div>
      <Matrix />

      <div className="mt-[17px]">
        <SectionHeader>ボーンジョイント属性</SectionHeader>
      </div>
      <div className="mt-[4px] flex gap-px pl-[4px]">
        <Tab width="w-[58px]" active>オイラー角</Tab>
        <Tab width="w-[37px]">回転</Tab>
      </div>
      <div className="pt-[3px]">
        <AngleRow axis="X" value={0} />
        <AngleRow axis="Y" value={0} />
        <AngleRow axis="Z" value={-29} />
      </div>
      <div className="relative mt-[4px] mb-[3px]">
        <Check label="範囲" checked />
      </div>
      <FormRow label="オフセット" id="offset">
        {lines(0, 2).map((i) => (
          <input key={i} id={i ? undefined : "offset"} aria-label={`オフセット ${i + 1}`} defaultValue="0.00" className={field + " w-0 flex-1"} />
        ))}
        <span className="w-[21px] text-[#eee]">mm</span>
      </FormRow>
      <FormRow label="ノードサイズ" id="node-size">
        <input id="node-size" defaultValue="68.75" className={field + " w-0 flex-1 text-center!"} />
        <span className="w-[23px] text-[#eee]">mm</span>
      </FormRow>
      <FormRow label="補間法" id="interp">
        <Drop id="interp" value="標準" />
      </FormRow>
      <div className="mt-[8px]">
        <SectionHeader>軸の整列</SectionHeader>
      </div>
      <div className="relative pt-px">
        <Check label="自動で軸合わせ" />
        <Highlight className="-top-[6px] -left-[3px] h-[30px] w-[117px]" />
      </div>
      <FormRow label="軸" id="axis">
        <Drop id="axis" value="Y" />
      </FormRow>
      <FormRow label="軸方向" id="axis-dir">
        {["0.00", "1.00", "0.00"].map((v, i) => (
          <input key={i} id={i ? undefined : "axis-dir"} aria-label={`軸方向 ${"XYZ"[i]}`} defaultValue={v} className={field + " w-0 flex-1"} />
        ))}
      </FormRow>
      <button className="ml-[98px] h-[15px] border border-black bg-[#6f6f6f] leading-3 text-[#999] shadow-[0_0_0_1px_#868686]">適用</button>
    </section>
  );
}

/* ---------- page ---------- */

export default function App() {
  return (
    <div className="flex h-screen gap-[3px] overflow-hidden bg-[#222] text-[11px] leading-3 [font-family:'Liberation_Sans','Noto_Sans_CJK_JP',sans-serif] [font-feature-settings:'palt']">
      <main className="flex min-w-0 flex-[344] flex-col">
        <div className="h-[3px] px-[3px]">
          <div className="h-[3px] w-[83px] bg-[#e6ee00]" />
        </div>
        <div className="flex h-[111px] flex-col gap-[4px] border-t border-r border-[#8a8a8a] bg-[#6f6f6f] pt-[2px]">
          <div className="flex gap-[3px]">
            <ToolButton label="範囲選択" width="w-[38px]" corner><MarqueeIcon /></ToolButton>
            <ToolButton label="回転" width="w-[38px]"><RotateIcon /></ToolButton>
            <ToolButton label="連鎖" width="w-[38px]" corner><ChainIcon /></ToolButton>
            <span className="w-0" />
            <ToolButton label="統合" width="w-[91px]" corner>
              <GizmoIcon />
              <span className="mr-8 ml-0.5">統合</span>
            </ToolButton>
            <ToolButton label="ワールド" width="w-[38px]" corner><WorldIcon /></ToolButton>
          </div>
          <div className="flex gap-[6px]">
            <div className="flex">
              <ToolButton label="ヘッド" width="w-7 border-l-0 pr-2"><HeadIcon /></ToolButton>
              <ToolButton label="車" width="w-9"><CarIcon /></ToolButton>
            </div>
            <div className="flex">
              <ToolButton label="グリッド吸着" width="w-9 bg-[#ecf400]!"><SnapGridIcon /></ToolButton>
              <ToolButton label="ミラー" width="w-9"><MirrorIcon /></ToolButton>
              <ToolButton label="計測" width="w-9"><ProtractorIcon /></ToolButton>
              <ToolButton label="数値" width="w-9">
                <span className="flex h-[19px] w-6 items-center justify-center rounded-[3px] border border-black bg-[#bcd7e3] text-[10px] font-bold text-black">
                  123..
                </span>
              </ToolButton>
              <ToolButton label="グリッド設定" width="w-9"><WrenchGridIcon /></ToolButton>
            </div>
          </div>
        </div>
        <div className="mt-px flex h-5 shrink-0 items-center border-t border-r border-[#8a8a8a] bg-[#6f6f6f] text-[#f0f0f0]">
          <button className="relative flex h-[15px] w-[23px] items-center overflow-hidden border border-l-0 border-black">
            <span className="-ml-[6px]">標</span>
            <span className="absolute right-px bottom-px border-b-[6px] border-l-[6px] border-b-black border-l-transparent" />
          </button>
          <span className="w-[67px] pl-[15px]">ドット</span>
          <span className="w-9">10</span>
          <span className="w-14">グリッド</span>
          <span className="w-[35px]">100</span>
          <div className="relative">
            <select aria-label="単位" className="block h-[15px] w-12 appearance-none border border-black bg-[#6b6b6b] px-[5px] leading-3 text-white shadow-[0_0_0_1px_#868686]">
              <option>mm</option>
            </select>
            <Corner />
          </div>
        </div>

        <section className="flex min-h-0 flex-[337] flex-col">
          <header className="flex h-[18px] shrink-0 items-center bg-linear-to-b from-[#a2a2a2] to-[#777] text-xs text-white">
            <h2 className="relative w-[157px] pl-3 leading-4 whitespace-nowrap">
              透視図 : メタカメラ 1
              <span className="absolute bottom-0 left-[126px] border-b-[4px] border-l-[4px] border-b-white border-l-transparent" />
            </h2>
            <button aria-label="ターゲット" className="mr-[15px]"><TargetIcon /></button>
            <button aria-label="ボックス" className="mr-auto"><CubeIcon /></button>
            <ViewNav />
          </header>
          <div className="relative min-h-0 flex-1 overflow-hidden text-xs text-white">
            <PerspectiveScene />
            <span className="absolute bottom-[6px] left-[57px] leading-4">グローバル</span>
            <div className="absolute right-[7px] bottom-[4px] flex flex-col items-end">
              <span className="bg-[#383838]/90 px-0.5 leading-4">グリッド: 500mm</span>
              <span className="bg-[#383838]/90 px-0.5 leading-[18px]">スナップ: 50mm</span>
            </div>
          </div>
        </section>

        <section className="flex min-h-0 flex-[286] flex-col border-t-2 border-black">
          <header className="flex h-[18px] shrink-0 items-center bg-linear-to-b from-[#484848] to-[#6e6e6e] text-xs text-white">
            <h2 className="relative w-[86px] pl-3 leading-4">
              右面図
              <span className="absolute bottom-0 left-[55px] border-b-[4px] border-l-[4px] border-b-white border-l-transparent" />
            </h2>
            <button aria-label="ターゲット" className="mr-auto"><TargetIcon /></button>
            <div className="mr-3.5 flex items-center gap-1.5">
              <svg className="h-3.5 w-3" viewBox="0 0 36 42"><path d="M0 8h18l14 24" fill="none" stroke="#eee" strokeWidth="4" /><path d="M10 38 22 18l14 20z" fill="#eee" /></svg>
              <svg className="h-3.5 w-4" viewBox="0 0 48 42"><path d="M0 12h18M9 3v18" stroke="#eee" strokeWidth="4" /><path d="m0 40 18-22 8 12L34 8l14 32z" fill="#eee" /></svg>
              <svg className="h-3.5 w-[17px]" viewBox="0 0 51 42">
                {lines(0, 7).map((i) => (
                  <path key={i} d="M15 10V3h7v7z" fill="#eee" transform={`rotate(${i * 45} 18.5 21)`} />
                ))}
                <circle cx="18.500" cy="21" r="9" fill="none" stroke="#eee" strokeWidth="8" />
                <path d="M50 28v13H37z" fill="#eee" />
              </svg>
            </div>
            <ViewNav />
          </header>
          <div className="relative min-h-0 flex-1 overflow-hidden text-xs text-white">
            <SideScene />
            <span className="absolute -bottom-[4px] left-[57px] leading-4">グローバル</span>
          </div>
        </section>
      </main>

      <aside className="flex min-w-0 flex-[301] flex-col">
        <div className="mt-[3px] mb-0.5 flex h-[13px] shrink-0 items-center border-t border-l border-[#8a8a8a] bg-[#6f6f6f] pl-0.5 text-sm text-[#aaa]">
          »
        </div>
        <Browser />
        <div className="h-[5px] shrink-0 border-t-2 border-[#6f6f6f]" />
        <InfoPalette />
      </aside>
    </div>
  );
}
